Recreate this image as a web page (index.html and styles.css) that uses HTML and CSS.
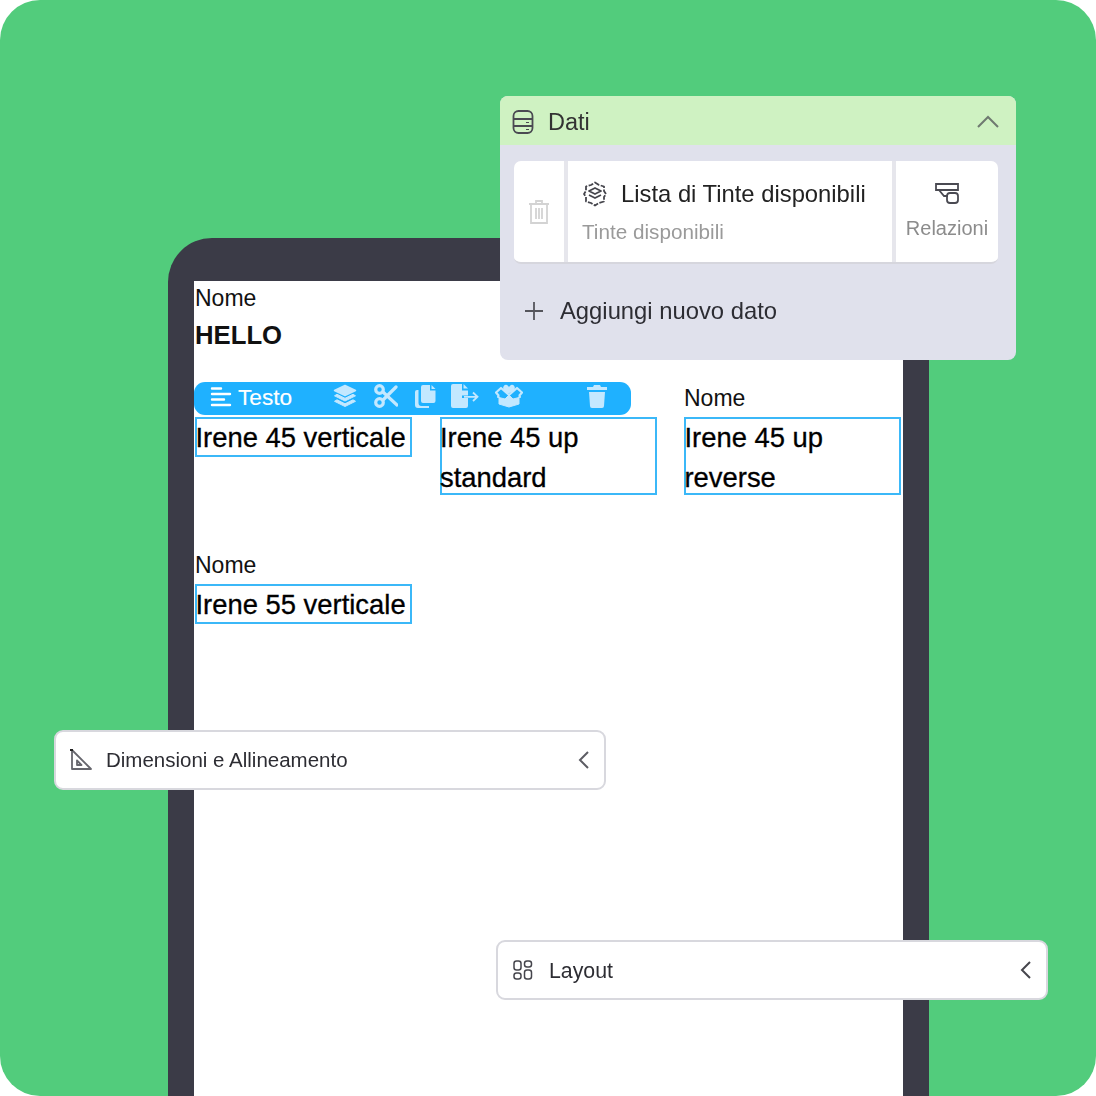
FILE: index.html
```html
<!DOCTYPE html>
<html lang="en">
<head>
    <meta charset="UTF-8">
    <title>Dati</title>
    <link rel="stylesheet" href="styles.css">
</head>
<body>
    <div class="stage">
        <div class="phone">
            <div class="screen">
                <div class="field">
                    <div class="label">Nome</div>
                    <div class="hello">HELLO</div>
                </div>

                <div class="grid">
                    <div class="toolbar">
                        <svg width="22" height="22" viewBox="0 0 22 22" fill="none" stroke="#fff" stroke-width="2.400" stroke-linecap="round"><path d="M2 2.500h9M2 8h18M2 13.500h12M2 19h18"/></svg>
                        <span class="tool-name">Testo</span>
                        <div class="tool-icons">
                            <svg class="tool-layers" width="24" height="24" viewBox="0 0 24 24" fill="#c3e8ff" stroke="#c3e8ff" stroke-linejoin="round"><path d="M12 1.500 22.500 6.500 12 11.500 1.500 6.500z" stroke-width="1.500"/><path d="M4 10.300 12 14.300l8-4 2.500 1.500L12 17 1.500 11.800z" stroke-width="1"/><path d="M4 15.800 12 19.800l8-4 2.500 1.500L12 22.500 1.500 17.300z" stroke-width="1"/></svg>
                            <svg width="24" height="24" viewBox="0 0 24 24" fill="none" stroke="#c3e8ff" stroke-width="3.200"><circle cx="5.500" cy="5.500" r="3.800"/><circle cx="5.500" cy="18.500" r="3.800"/><path d="M9 8l14 13M9 16 22 3" stroke-linecap="round"/></svg>
                            <svg width="22" height="24" viewBox="0 0 22 24" fill="#c3e8ff"><path d="M9 1h7v5.500h5.500V17a2 2 0 0 1-2 2H9a2 2 0 0 1-2-2V3a2 2 0 0 1 2-2z"/><path d="M17.500 1l4 4h-4z"/><path d="M4.500 6v13a3 3 0 0 0 3 3H15v2H4a3 3 0 0 1-3-3V8a2 2 0 0 1 2-2z"/></svg>
                            <svg width="28" height="24" viewBox="0 0 28 24" fill="#c3e8ff"><path d="M2 0h9v6.500h6v5H11v2.500h6v8a2 2 0 0 1-2 2H2a2 2 0 0 1-2-2V2a2 2 0 0 1 2-2z"/><path d="M12.500 0l4.500 4.500h-4.500z"/><path d="M13 12.800h13M22 8.500l4.500 4.300L22 17" fill="none" stroke="#c3e8ff" stroke-width="1.800"/></svg>
                            <svg width="28" height="24" viewBox="0 0 28 24" fill="none" stroke="#c3e8ff" stroke-width="2.200" stroke-linejoin="round"><path d="M14 11 6 4 1 8.500l3 3.500"/><path d="M14 11l8-7 5 4.500-3 3.500"/><path d="M9.500 3c1-2 3-1.500 4.500 3 1.500-4.500 3.500-5 4.500-3S17 7.500 14 8 8.500 5 9.500 3z" fill="#c3e8ff"/><path d="M14 11l-4 4-8-2 2-1v8l10 3 10-3v-8l2 1-8 2z" fill="#c3e8ff" stroke-width="1"/></svg>
                            <svg class="tool-trash" width="20" height="24" viewBox="0 0 20 24" fill="#c3e8ff"><path d="M0 3h6l1-2h6l1 2h6v3H0z"/><path d="M2 8h16l-1 14a2 2 0 0 1-2 2H5a2 2 0 0 1-2-2z"/></svg>
                        </div>
                    </div>
                    <div class="label top-label">Nome</div>

                    <div class="cell"><span class="cell-text">Irene 45 verticale</span></div>
                    <div class="cell cell-tall"><span class="cell-text">Irene 45 up standard</span></div>
                    <div class="cell cell-tall"><span class="cell-text">Irene 45 up reverse</span></div>

                    <div class="label second-label">Nome</div>
                    <div class="cell first-col"><span class="cell-text">Irene 55 verticale</span></div>
                </div>
            </div>
        </div>

        <div class="dati-panel">
            <div class="dati-head">
                <svg width="24" height="26" viewBox="0 0 24 26" fill="none" stroke="#4a4a52" stroke-width="1.800"><rect x="2.500" y="2" width="19" height="22" rx="5"/><path d="M2.500 10h19M2.500 17h19"/><path d="M15 13.500h3M15 20.500h3" stroke-width="1.200"/></svg>
                <span class="dati-title">Dati</span>
                <svg class="chevron-up" width="24" height="14" viewBox="0 0 24 14" fill="none" stroke="#6f7a70" stroke-width="2"><path d="M2 13 12 3l10 10"/></svg>
            </div>
            <div class="dati-body">
                <div class="dati-card">
                    <div class="card-trash">
                        <svg width="22" height="26" viewBox="0 0 22 26" fill="none" stroke="#d3d3d3" stroke-width="1.800"><path d="M1 5h20M8 5V2h6v3"/><path d="M3 5v19h16V5"/><path d="M8 9v11M11 9v11M14 9v11"/></svg>
                    </div>
                    <div class="card-main">
                        <div class="card-title">
                            <svg width="26" height="26" viewBox="0 0 26 26" fill="none" stroke="#45454c" stroke-width="1.800" stroke-linejoin="round"><path d="M13 1.500 17 4l5 1.500v4.500l2 3-2 3v4.500L17 22l-4 2.500L9 22l-5-1.500V16l-2-3 2-3V5.500L9 4z" stroke-dasharray="5 1.500"/><path d="M7 10l6-3 6 3-6 3z"/><path d="M7 14l6 3 6-3"/></svg>
                            <span>Lista di Tinte disponibili</span>
                        </div>
                        <div class="card-sub">Tinte disponibili</div>
                    </div>
                    <div class="card-rel">
                        <svg width="26" height="24" viewBox="0 0 26 24" fill="none" stroke="#4a4a52" stroke-width="1.800"><path d="M2 2h22v6H2z"/><path d="M5 8l5 6h4"/><rect x="13" y="11" width="11" height="10" rx="3"/></svg>
                        <span>Relazioni</span>
                    </div>
                </div>
                <div class="add-row">
                    <svg width="20" height="20" viewBox="0 0 20 20" stroke="#55555c" stroke-width="1.800"><path d="M10 1v18M1 10h18"/></svg>
                    <span>Aggiungi nuovo dato</span>
                </div>
            </div>
        </div>

        <div class="bar-panel size-panel">
            <svg width="26" height="24" viewBox="0 0 26 24" fill="none" stroke="#66666d" stroke-width="1.800" stroke-linejoin="round"><path d="M4 2v19h19z"/><path d="M9 12.500v4.500h4.500z"/><path d="M2 2h3" stroke="#222" stroke-width="2"/></svg>
            <span class="bar-title">Dimensioni e Allineamento</span>
            <svg class="chevron" width="12" height="20" viewBox="0 0 12 20" fill="none" stroke="#5c5c63" stroke-width="2"><path d="M10 2 2 10l8 8"/></svg>
        </div>

        <div class="bar-panel layout-panel">
            <svg width="22" height="22" viewBox="0 0 22 22" fill="none" stroke="#45454c" stroke-width="1.500"><rect x="2" y="2" width="7" height="9" rx="2.500"/><rect x="2" y="14" width="7" height="6" rx="2.500"/><rect x="12.500" y="2" width="7" height="6" rx="2.500"/><rect x="12.500" y="11" width="7" height="9" rx="2.500"/></svg>
            <span class="bar-title layout-title">Layout</span>
            <svg class="chevron" width="12" height="20" viewBox="0 0 12 20" fill="none" stroke="#45454c" stroke-width="2"><path d="M10 2 2 10l8 8"/></svg>
        </div>
    </div>
</body>
</html>
```

FILE: styles.css
```css
* {
    margin: 0;
    padding: 0;
    box-sizing: border-box;
}
body {
    font-family: "Liberation Sans", Arial, sans-serif;
    background: #fff;
    color: #111;
}
svg {
    display: block;
    flex-shrink: 0;
}
.stage {
    position: relative;
    width: 1096px;
    height: 1096px;
    padding: 238px 0 0 168px;
    background: #52cc7c;
    border-radius: 40px;
    overflow: hidden;
}
.phone {
    width: 761px;
    height: 858px;
    padding: 43px 26px 0;
    background: #3b3b47;
    border-radius: 44px 44px 0 0;
}
.screen {
    height: 100%;
    padding-left: 1px;
    background: #fff;
}
.label {
    font-size: 23px;
    line-height: 34px;
}
.hello {
    margin-top: 2px;
    font-size: 25.700px;
    line-height: 36px;
    font-weight: bold;
}
.field {
    height: 101px;
}
.grid {
    display: grid;
    grid-template-columns: 217px 217px 217px;
    column-gap: 27.500px;
    align-items: start;
}
.toolbar {
    grid-column: span 2;
    display: flex;
    align-items: center;
    width: 437px;
    height: 33px;
    margin: 0 0 2px -1px;
    padding: 0 0 3px 16px;
    background: #1fb1ff;
    border-radius: 11px;
}
.tool-name {
    margin-left: 6px;
    color: #fff;
    font-size: 22.700px;
    -webkit-text-stroke: 0.15px #fff;
}
.tool-icons {
    flex: 1;
    display: flex;
    align-items: center;
    gap: 15.500px;
    margin-left: 41px;
    padding: 0 24px 3px 0;
}
.tool-layers {
    margin-right: 1.500px;
}
.tool-trash {
    margin-left: auto;
}
.top-label {
    line-height: 33px;
}
.cell {
    height: 40px;
    border: 2px solid #3bb8f8;
    font-size: 27.400px;
    line-height: 40px;
    color: #000;
    -webkit-text-stroke: 0.3px #000;
    white-space: nowrap;
}
.cell-text {
    display: block;
    margin: -1px 0 0 -1.500px;
}
.cell-tall {
    height: 78px;
    white-space: normal;
}
.second-label {
    grid-column: 1;
    margin-top: 53px;
    margin-bottom: 2px;
}
.first-col {
    grid-column: 1;
}
.dati-panel {
    position: absolute;
    left: 500px;
    top: 96px;
    width: 516px;
    height: 264px;
    background: #e0e1ec;
    border-radius: 8px;
    overflow: hidden;
    filter: blur(0.4px);
}
.dati-head {
    display: flex;
    align-items: center;
    height: 49px;
    padding: 2px 16px 0 11px;
    background: #cff2c2;
}
.dati-title {
    margin: 2px 0 0 13px;
    font-size: 23.500px;
    color: #333;
}
.chevron-up {
    margin: -2px 0 0 auto;
}
.dati-body {
    padding: 16px 18px 0 14px;
}
.dati-card {
    display: flex;
    height: 103px;
    background: #e6e6ec;
    border-radius: 7px;
    border-bottom: 2px solid #d6d6dd;
    overflow: hidden;
}
.card-trash {
    display: flex;
    align-items: center;
    justify-content: center;
    width: 50px;
    background: #fff;
}
.card-main {
    width: 324px;
    margin: 0 4px;
    padding: 19px 0 0 14px;
    background: #fff;
}
.card-title {
    display: flex;
    align-items: center;
    gap: 13px;
    height: 28px;
    font-size: 23.800px;
    color: #222;
}
.card-sub {
    margin-top: 12px;
    font-size: 20.700px;
    color: #9a9a9a;
}
.card-rel {
    flex: 1;
    display: flex;
    flex-direction: column;
    align-items: center;
    padding-top: 21px;
    gap: 11px;
    background: #fff;
    font-size: 20px;
    color: #8c8c8c;
}
.add-row {
    display: flex;
    align-items: center;
    gap: 16px;
    margin-top: 33px;
    padding-left: 10px;
    font-size: 23.800px;
    color: #2d2d33;
}
.bar-panel {
    position: absolute;
    display: flex;
    align-items: center;
    width: 552px;
    height: 60px;
    background: #fff;
    border: 2px solid #d8d8de;
    border-radius: 9px;
    filter: blur(0.3px);
}
.size-panel {
    left: 54px;
    top: 730px;
    padding: 0 14px 0 12px;
}
.layout-panel {
    left: 496px;
    top: 940px;
    padding: 0 14px;
}
.bar-title {
    margin-left: 12px;
    font-size: 20.500px;
    color: #2d2d33;
}
.layout-title {
    margin: 2px 0 0 15px;
    font-size: 21.300px;
}
.chevron {
    margin-left: auto;
}
```
